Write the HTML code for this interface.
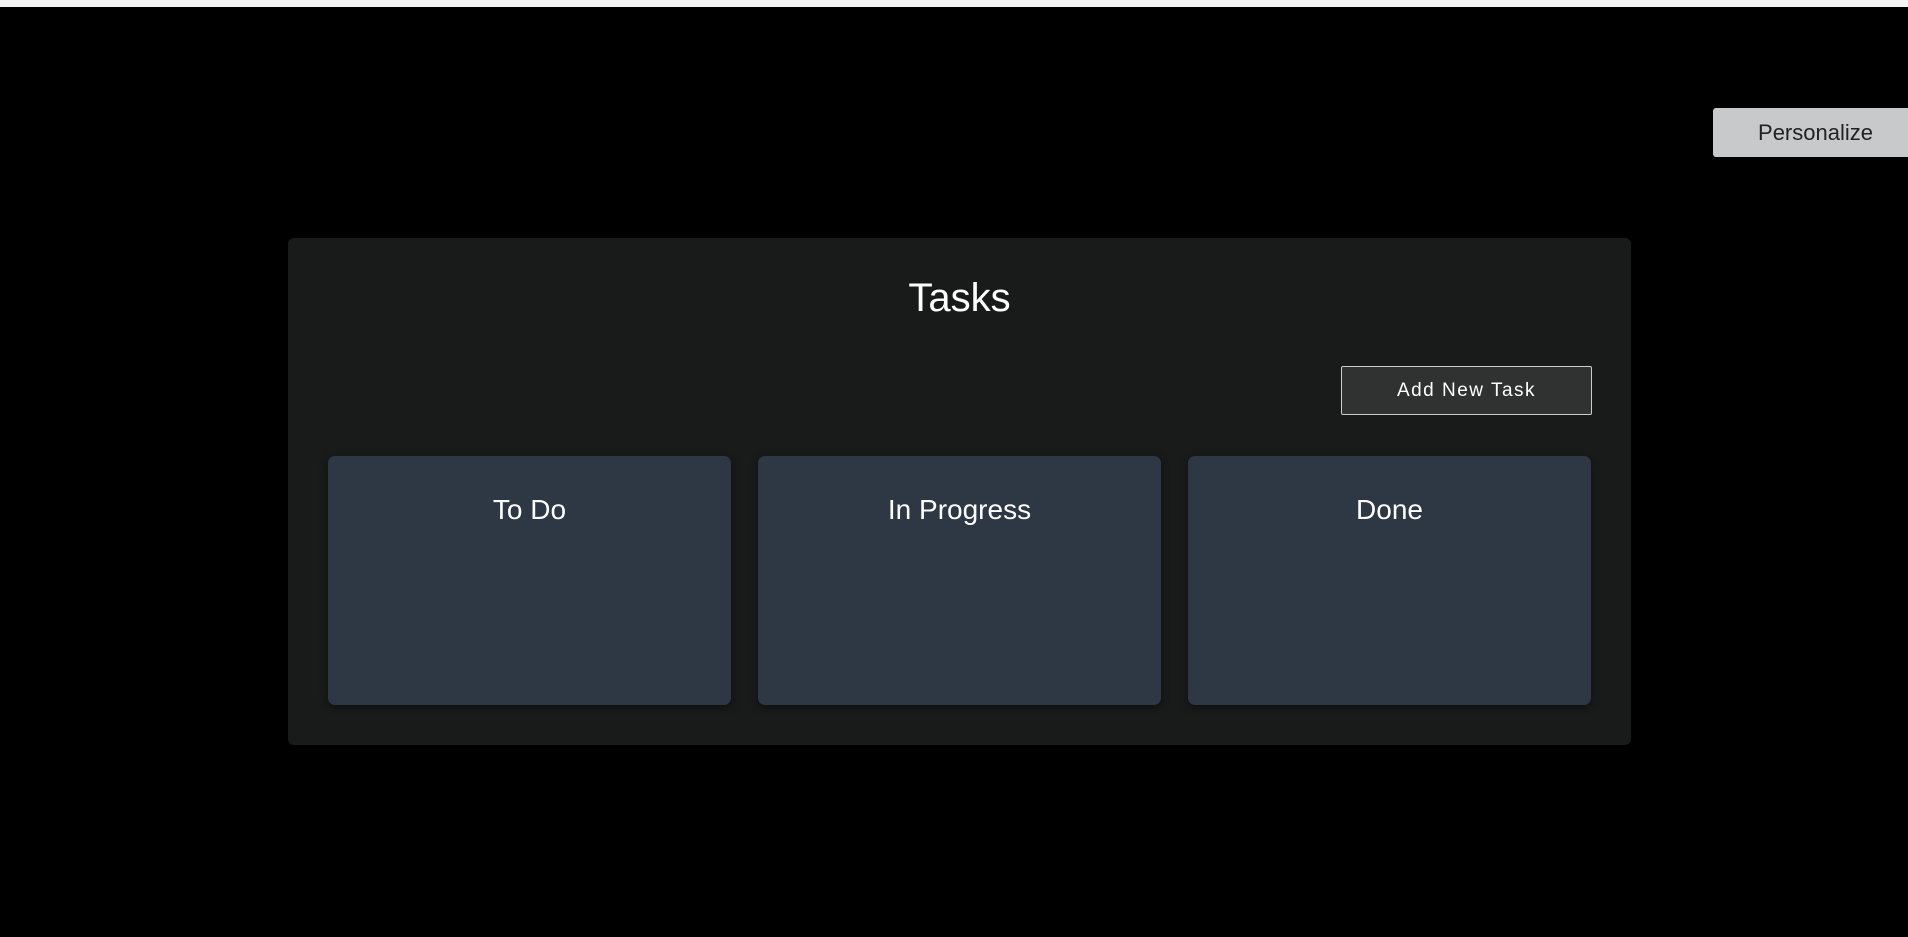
<!DOCTYPE html>
<html><head><meta charset="utf-8"><style>
body{margin:0;width:1908px;height:937px;background:#000;position:relative;overflow:hidden;font-family:"Liberation Sans",sans-serif}
.top{position:absolute;left:0;top:0;width:1908px;height:7px;background:#f4f4f4}
.pers{position:absolute;left:1713px;top:108px;width:195px;height:49px;background:#c8c9cb;border-radius:3px 0 0 3px;color:#222;font-size:22px;line-height:49px;text-align:center;box-sizing:border-box;padding-left:10px}
.panel{position:absolute;left:288px;top:238px;width:1343px;height:507px;background:#191a1a;border-radius:6px}
h1{position:absolute;left:288px;width:1343px;top:270px;margin:0;text-align:center;color:#fff;font-weight:normal;font-size:40px;line-height:56px}
.add{position:absolute;left:1341px;top:366px;width:251px;height:49px;box-sizing:border-box;border:1px solid #ccc;border-radius:2px;background:#2f3231;color:#fff;font-size:19px;line-height:47px;text-align:center;letter-spacing:1.5px}
.col{position:absolute;top:456px;width:403px;height:249px;background:#2e3744;border-radius:7px;box-shadow:0 3px 8px rgba(0,0,0,.4);color:#fff;font-size:28px;text-align:center;line-height:36px}
.col span{position:absolute;left:0;width:100%;top:36px}
</style></head><body>
<div class="top"></div>
<div class="pers">Personalize</div>
<div class="panel"></div>
<h1>Tasks</h1>
<div class="add">Add New Task</div>
<div class="col" style="left:328px"><span>To Do</span></div>
<div class="col" style="left:758px"><span>In Progress</span></div>
<div class="col" style="left:1188px"><span>Done</span></div>
</body></html>
